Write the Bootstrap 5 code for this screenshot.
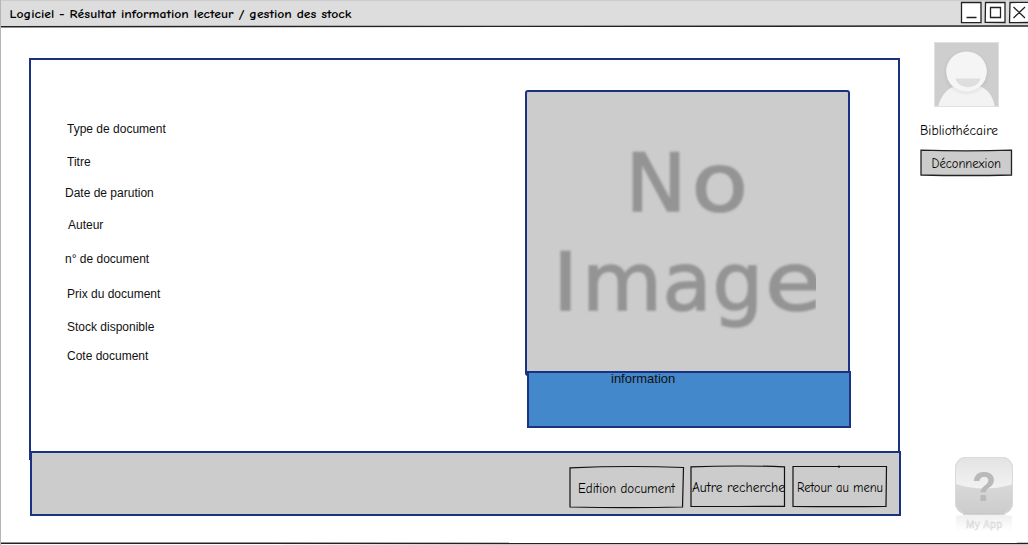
<!DOCTYPE html>
<html lang="fr">
<head>
<meta charset="utf-8">
<meta name="viewport" content="width=device-width, initial-scale=1">
<title>Logiciel - Résultat information lecteur / gestion des stock</title>
<link href="https://cdn.jsdelivr.net/npm/bootstrap@5.3.0/dist/css/bootstrap.min.css" rel="stylesheet">
<style>
body{margin:0;background:#fff;color:#111;overflow:hidden;font-family:"Liberation Sans",sans-serif}
.window{width:1028px;height:545px;border-left:1px solid #b5b5b5}
.titlebar{height:26px;background:#ddd;border-top:1px solid #ccc}
.hand{font-family:"Comic Sans MS","Comic Neue","Open Sans",sans-serif;white-space:nowrap}
.fit{display:block;overflow:visible}
.sheet{width:871px;height:402px;margin:31px 0 0 28px;border:2px solid #1b3282;border-bottom:0}
.fields{display:grid;grid-template-rows:33px 31px 32px 34px 35px 33px 29px 18px;margin:60px 0 0 34px;width:200px;align-self:flex-start;font-size:12px;line-height:18px}
.in-2{margin-left:2px}
.in-3{margin-left:3px}
.preview{width:326px;margin:30px 0 0 260px}
.no-image{width:325px;height:286px;background:#ccc;border:2px solid #1b3282;border-radius:3px}
.glyphs{filter:blur(.9px)}
.crop{overflow:hidden}
.info{width:324px;height:57px;margin:-5px 0 0 2px;background:#4488cc;border:2px solid #1b3282;font-size:13px;line-height:11px;padding-left:82px;position:relative}
.actions{width:871px;height:65px;margin:-9px 0 0 29px;padding:12px 0 0 536px;background:#ccc;border:2px solid #1b3282;position:relative}
.sketch-btn{background:none;border:0;padding:0;border-radius:0;display:block}
.actions .sketch-btn{height:44px}
.side{width:110px;margin-left:9px}
.avatar{margin:15px 0 0 24px}
.app-icon{margin:278px 0 0 43px}
.logout{margin-left:10px}
</style>
</head>
<body>
<div class="window d-flex flex-column">
  <header class="titlebar d-flex justify-content-between flex-shrink-0">
    <svg class="fit hand" width="380" height="26"><text x="8.500" y="17" font-size="11.5" font-weight="700" textLength="342" lengthAdjust="spacingAndGlyphs">Logiciel - Résultat information lecteur / gestion des stock</text></svg>
    <svg class="fit" width="68" height="25" fill="none" stroke="#222" stroke-width="1.3">
      <g fill="#fff"><path d="M1.500 1.500 21 1.300V21.500L1.500 21.700Z"/><path d="M25.500 1.300 45 1.500V21.500L25.200 21.400Z"/><path d="M50 1.500 70 1.300V21.500L49.500 21.700Z"/></g>
      <path d="M6.500 16.500H16.500M30.500 6.500H40.500V16.500H30.500ZM53.500 6 65 17M65 6 53.500 17"/>
    </svg>
  </header>
  <svg class="fit flex-shrink-0" width="1027" height="1"><path d="M0 .7 1027 0" stroke="#222" stroke-width="1.4"/></svg>
  <div class="d-flex flex-grow-1">
    <main>
      <section class="sheet d-flex">
        <div class="fields">
          <span class="in-2">Type de document</span>
          <span class="in-2">Titre</span>
          <span>Date de parution</span>
          <span class="in-3">Auteur</span>
          <span>n° de document</span>
          <span class="in-2">Prix du document</span>
          <span class="in-2">Stock disponible</span>
          <span class="in-2">Cote document</span>
        </div>
        <div class="preview">
          <div class="no-image">
            <svg class="d-block crop" width="289" height="280" font-family="DejaVu Sans" font-size="79.500" fill="#949494" stroke="#949494" stroke-width="1.6">
              <g class="glyphs">
                <text y="118.500"><tspan x="98.500" textLength="61" lengthAdjust="spacingAndGlyphs">N</tspan><tspan x="164.500" textLength="56.500" lengthAdjust="spacingAndGlyphs">o</tspan></text>
                <text y="217.500"><tspan x="26" textLength="25" lengthAdjust="spacingAndGlyphs">I</tspan><tspan x="55" textLength="80" lengthAdjust="spacingAndGlyphs">m</tspan><tspan x="135.500" textLength="49" lengthAdjust="spacingAndGlyphs">a</tspan><tspan x="185.500" textLength="50.500" lengthAdjust="spacingAndGlyphs">g</tspan><tspan x="238" textLength="57" lengthAdjust="spacingAndGlyphs">e</tspan></text>
              </g>
            </svg>
          </div>
          <div class="info">information</div>
        </div>
      </section>
      <footer class="actions d-flex">
        <button class="sketch-btn hand"><svg class="fit" width="121" height="44"><path d="M2 2.800Q60 .4 115.500 2.500L114.500 42Q60 43.300 2 42Z" fill="none" stroke="#111" stroke-width="1.2"/><text x="10" y="28" font-size="13" textLength="97" lengthAdjust="spacingAndGlyphs">Edition document</text></svg></button>
        <button class="sketch-btn hand"><svg class="fit" width="102" height="44"><path d="M2 1.800Q50 .2 95.500 1.800L95.500 41.300Q48 41.700 2 41.300Z" fill="none" stroke="#111" stroke-width="1.2"/><text x="3" y="27" font-size="13" textLength="93" lengthAdjust="spacingAndGlyphs">Autre recherche</text></svg></button>
        <button class="sketch-btn hand"><svg class="fit" width="97" height="44"><path d="M2 1.500H95.500L95 41.300Q48 42 2 41.300ZM48 .5V3" fill="none" stroke="#111" stroke-width="1.2"/><text x="6" y="27" font-size="13" textLength="86" lengthAdjust="spacingAndGlyphs">Retour au menu</text></svg></button>
      </footer>
    </main>
    <aside class="side d-flex flex-column">
      <svg class="avatar d-block" width="65" height="65" viewBox="0 0 64 65" preserveAspectRatio="none">
        <defs><radialGradient id="sh"><stop offset=".7" stop-color="#b5b5b5"/><stop offset="1" stop-color="#b5b5b5" stop-opacity="0"/></radialGradient></defs>
        <rect width="64" height="65" fill="#cecece"/>
        <circle cx="32" cy="31" r="24" fill="url(#sh)" opacity=".4"/>
        <path d="M4 65C7 52 15 44 24 44H41C51 44 58 53 60 65Z" fill="#f3f3f3"/>
        <circle cx="32" cy="31" r="23" fill="url(#sh)" opacity=".35"/>
        <circle cx="32" cy="29.500" r="20" fill="#f5f5f5"/>
        <path d="M21 36.500H46C42.500 48 24.500 48 21 36.500Z" fill="#dedede"/>
        <rect x=".5" y=".5" width="63" height="64" fill="none" stroke="#e0e0e0"/>
      </svg>
      <svg class="fit hand" width="92" height="28"><text x="10" y="28" font-size="13" textLength="78" lengthAdjust="spacingAndGlyphs">Bibliothécaire</text></svg>
      <button class="sketch-btn hand logout"><svg class="fit" width="93" height="42"><path d="M1 15.200Q46 16.500 91.500 15.200V40Q46 41 1 40Z" fill="#ccc" stroke="#222" stroke-width="1.3"/><text x="11.500" y="33" font-size="13" textLength="69.500" lengthAdjust="spacingAndGlyphs">Déconnexion</text></svg></button>
      <svg class="fit app-icon" width="64" height="84" font-family="Liberation Sans">
        <defs>
          <linearGradient id="top" x2="0" y2="1"><stop stop-color="#e2e2e2"/><stop offset="1" stop-color="#f2f2f2"/></linearGradient>
          <linearGradient id="low" x2="0" y2="1"><stop offset=".4" stop-color="#dadada"/><stop offset="1" stop-color="#cbcbcb"/></linearGradient>
          <linearGradient id="refl" x2="0" y2="1"><stop stop-color="#e4e4e4"/><stop offset="1" stop-color="#fff"/></linearGradient>
          <clipPath id="tile"><rect x="2" y="2" width="58" height="57" rx="11"/></clipPath>
        </defs>
        <path d="M3 61Q31 56 59 61V76H3Z" fill="url(#refl)" opacity=".65"/>
        <g clip-path="url(#tile)"><rect width="64" height="62" fill="url(#low)"/><path d="M0 0H64V28Q31 39 0 28Z" fill="url(#top)"/></g>
        <rect x="2.500" y="2.500" width="57" height="56" rx="11" fill="none" stroke="#dadada"/>
        <path d="M10 59H52" stroke="#b5b5b5"/>
        <text x="31" y="46" font-size="42" font-weight="700" text-anchor="middle" fill="#b9b9b9" textLength="24" lengthAdjust="spacingAndGlyphs">?</text>
        <text x="13" y="73" font-size="10" textLength="36" fill="#fff" stroke="#d4d4d4" stroke-width=".5">My App</text>
      </svg>
    </aside>
  </div>
  <svg class="fit flex-shrink-0" width="1027" height="3"><path d="M0 1.300 1027 1.500" stroke="#222" stroke-width="1.5"/></svg>
</div>
<script src="https://cdn.jsdelivr.net/npm/bootstrap@5.3.0/dist/js/bootstrap.bundle.min.js"></script>
</body>
</html>
